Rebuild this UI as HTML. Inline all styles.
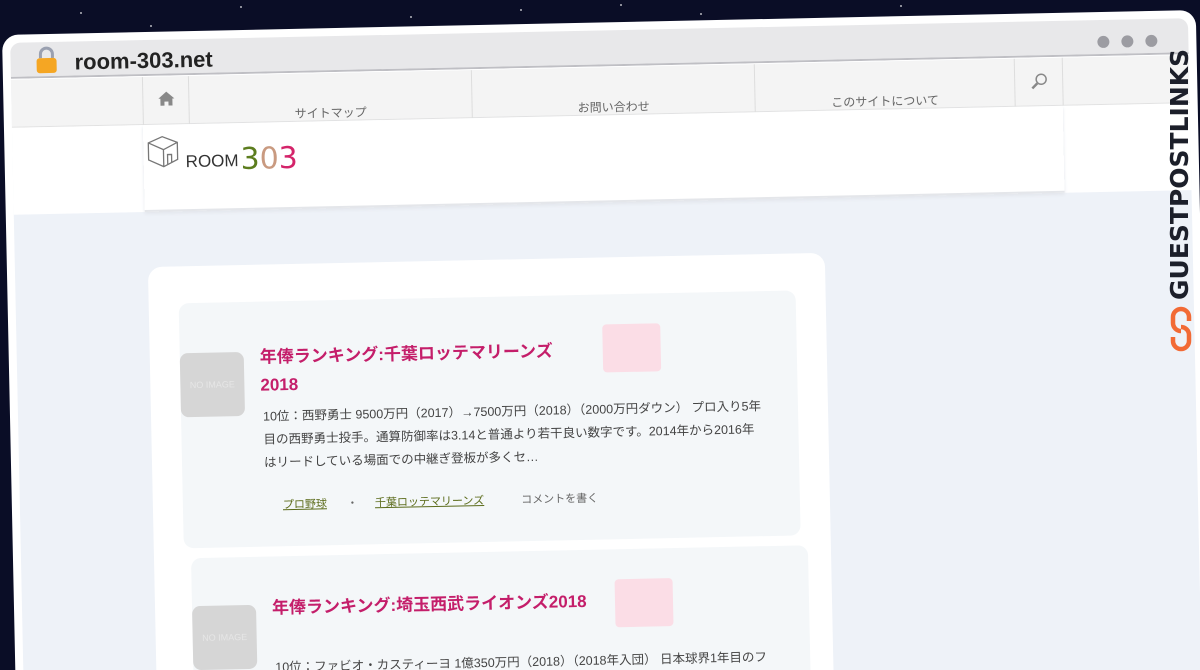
<!DOCTYPE html>
<html><head><meta charset="utf-8">
<style>
*{margin:0;padding:0;box-sizing:border-box}
html{width:1200px;height:670px;overflow:hidden}
body{width:1200px;height:670px;overflow:hidden;background:#0a0d26;font-family:"Liberation Sans","Noto Sans CJK JP",sans-serif;position:relative}
.star{position:absolute;width:2px;height:2px;background:#fff;border-radius:50%;opacity:.7}
#win{position:absolute;left:2px;top:35px;width:1194px;height:700px;transform-origin:0 0;transform:rotate(-1.2deg);background:#fff;border-radius:16px;overflow:hidden}
.title{position:absolute;left:8px;top:8px;right:8px;height:36px;background:#e8e8ea;border-bottom:2px solid #bfbfc4;border-radius:10px 10px 0 0}
.url{position:absolute;left:64px;top:8px;font-size:22px;font-weight:bold;color:#222}
.dot{position:absolute;top:16px;width:12px;height:12px;border-radius:50%;background:#9c9ca2}
.page{position:absolute;left:8px;top:45px;right:8px;bottom:0;background:#eef2f8}
.nav{position:absolute;left:0;right:0;top:0;height:48px;background:#f4f4f4;border-bottom:1px solid #e2e2e2}
.hdr{position:absolute;left:0;right:0;top:48px;height:87px;background:#fff}
.navin{position:absolute;left:131px;width:920px;top:0;height:48px;border-left:1px solid #ddd}
.navin div{position:absolute;top:0;height:48px;border-right:1px solid #ddd;font-size:12px;color:#666;text-align:center;padding-top:31px}
.card{position:absolute;left:133px;top:190px;width:677px;height:500px;background:#fff;border-radius:14px}
.post{position:absolute;left:30px;width:617px;height:245px;background:#f4f7f9;border-radius:10px}
.noimg{position:absolute;left:0;width:64px;height:64px;background:#d6d6d6;border-radius:8px;color:#e6e6e6;font-size:9px;text-align:center;line-height:64px}
.ttl{position:absolute;left:80px;color:#c41e6a;font-weight:bold;font-size:17px;line-height:28px}
.badge{position:absolute;width:58px;height:48px;background:#fbdde6;border-radius:4px}
.ex{position:absolute;left:82px;top:104px;width:500px;font-size:12.5px;line-height:23px;color:#444}
.tags{position:absolute;left:100px;top:195px;font-size:11px;color:#666}
.tags a{color:#5b6b1a;text-decoration:underline;margin-right:20px}
</style></head><body>
<div class="star" style="left:80px;top:12px"></div><div class="star" style="left:240px;top:6px"></div><div class="star" style="left:410px;top:16px"></div><div class="star" style="left:620px;top:4px"></div><div class="star" style="left:700px;top:13px"></div><div class="star" style="left:900px;top:5px"></div><div class="star" style="left:150px;top:25px"></div><div class="star" style="left:520px;top:9px"></div>
<div id="win">
 <div class="title">
  <svg style="position:absolute;left:24px;top:4px" width="24" height="28" viewBox="0 0 24 28"><path d="M6 12V8a6 6 0 0 1 12 0v4" fill="none" stroke="#9aa0b0" stroke-width="3"/><rect x="2" y="12" width="20" height="15" rx="3" fill="#f5a623"/></svg>
  <div class="url">room-303.net</div>
  <div class="dot" style="left:1087px"></div><div class="dot" style="left:1111px"></div><div class="dot" style="left:1135px"></div>
 </div>
 <div class="page">
  <div class="nav">
   <div class="navin">
    <div style="left:0;width:46px;padding-top:14px"><svg width="18" height="16" viewBox="0 0 18 16"><path d="M9 1L1 8h2v7h4v-4h4v4h4V8h2z" fill="#888"/></svg></div>
    <div style="left:46px;width:283px">サイトマップ</div>
    <div style="left:329px;width:283px">お問い合わせ</div>
    <div style="left:612px;width:260px">このサイトについて</div>
    <div style="left:872px;width:48px;padding-top:14px"><svg width="18" height="18" viewBox="0 0 18 18"><circle cx="11" cy="7" r="5" fill="none" stroke="#888" stroke-width="1.5"/><path d="M7 11L2 16" stroke="#888" stroke-width="2.5"/></svg></div>
   </div>
  </div>
  <div class="hdr">
   <div style="position:absolute;left:131px;top:0;width:920px;height:87px;border-bottom:2px solid #e4e6ea;box-shadow:0 2px 3px #e3e6ec"></div>
   <svg style="position:absolute;left:133px;top:8px" width="36" height="36" viewBox="0 0 36 36"><path d="M3 10L17 4l15 6v17l-14 7L3 27z M3 10l15 7 14-7 M18 17v17 M22 32v-10h4v8" fill="none" stroke="#777" stroke-width="1.3"/></svg>
   <div style="position:absolute;left:173px;top:16px;font-size:17px;color:#333">ROOM<span style="font-size:30px;position:relative;top:3px;margin-left:2px;font-family:'DejaVu Sans',sans-serif"><span style="color:#5c7d1e">3</span><span style="color:#c99a80">0</span><span style="color:#d4246a">3</span></span></div>
  </div>
  <div class="card">
   <div class="post" style="top:37px">
    <div class="noimg" style="top:50px">NO IMAGE</div>
    <div class="ttl" style="top:42px">年俸ランキング:千葉ロッテマリーンズ<br>2018</div>
    <div class="badge" style="left:423px;top:30px"></div>
    <div class="ex">10位：西野勇士 9500万円（2017）→7500万円（2018）（2000万円ダウン） プロ入り5年目の西野勇士投手。通算防御率は3.14と普通より若干良い数字です。2014年から2016年はリードしている場面での中継ぎ登板が多くセ…</div>
    <div class="tags"><a>プロ野球</a>・ <a style="margin-left:14px">千葉ロッテマリーンズ</a> <span style="margin-left:14px">コメントを書く</span></div>
   </div>
   <div class="post" style="top:292px;left:37px">
    <div class="noimg" style="top:48px">NO IMAGE</div>
    <div class="ttl" style="top:38px">年俸ランキング:埼玉西武ライオンズ2018</div>
    <div class="badge" style="left:423px;top:30px"></div>
    <div class="ex" style="top:100px">10位：ファビオ・カスティーヨ 1億350万円（2018）（2018年入団） 日本球界1年目のファ</div>
   </div>
  </div>
 </div>
</div>
<div style="position:absolute;left:1165px;top:300px;width:0;height:0">
 <div style="position:absolute;left:0;top:0;transform:rotate(-90deg);transform-origin:0 0;font-family:'DejaVu Sans',sans-serif;font-weight:bold;font-size:25px;color:#1c1f2a;white-space:nowrap">GUESTPOSTLINKS</div>
</div>
<svg style="position:absolute;left:1168px;top:305px" width="26" height="48" viewBox="0 0 26 48"><path d="M13 4a8 8 0 0 0-8 8v6a8 8 0 0 0 8 8 M13 44a8 8 0 0 0 8-8v-6a8 8 0 0 0-8-8 M13 4a8 8 0 0 1 8 8v4 M13 44a8 8 0 0 1-8-8v-4" fill="none" stroke="#f26a35" stroke-width="4.5"/></svg>
</body></html>
